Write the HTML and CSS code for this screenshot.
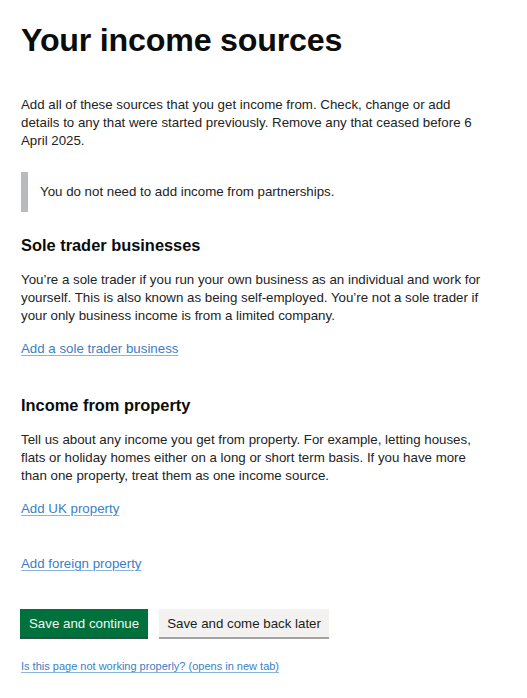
FILE: index.html
```html
<!DOCTYPE html>
<html lang="en">
<head>
<meta charset="utf-8">
<title>Your income sources</title>
<link rel="stylesheet" href="styles.css">
</head>
<body>
<main class="page">
  <h1 class="heading-xl">Your income sources</h1>
  <p class="body intro">Add all of these sources that you get income from. Check, change or add details to any that were started previously. Remove any that ceased before 6 April 2025.</p>
  <div class="inset">You do not need to add income from partnerships.</div>

  <section class="source">
    <h2 class="heading-m">Sole trader businesses</h2>
    <p class="body">You’re a sole trader if you run your own business as an individual and work for yourself. This is also known as being self-employed. You’re not a sole trader if your only business income is from a limited company.</p>
    <p class="link-row"><a class="link" href="#">Add a sole trader business</a></p>
  </section>

  <section class="source">
    <h2 class="heading-m">Income from property</h2>
    <p class="body">Tell us about any income you get from property. For example, letting houses, flats or holiday homes either on a long or short term basis. If you have more than one property, treat them as one income source.</p>
    <p class="link-row"><a class="link" href="#">Add UK property</a></p>
    <p class="link-row spaced"><a class="link" href="#">Add foreign property</a></p>
  </section>

  <div class="button-group">
    <button class="button primary" type="button">Save and continue</button>
    <button class="button secondary" type="button">Save and come back later</button>
  </div>

  <p class="help"><a class="link small" href="#">Is this page not working properly? (opens in new tab)</a></p>
</main>
</body>
</html>
```

FILE: styles.css
```css
html, body {
  margin: 0;
  padding: 0;
  background: #ffffff;
}

body {
  font-family: "Liberation Sans", Arial, sans-serif;
  color: #0b0c0c;
  -webkit-font-smoothing: antialiased;
}

.page {
  display: flex;
  flex-direction: column;
  align-items: flex-start;
  padding: 22px 21px 20px 20px;
  max-width: 470px;
}

.heading-xl {
  margin: 0 0 38px 1px;
  font-size: 32.2px;
  line-height: 36px;
  font-weight: 700;
  letter-spacing: -0.2px;
}

.body {
  margin: 0 0 0 1px;
  font-size: 13.3px;
  line-height: 18px;
  color: #222323;
}

.intro {
  margin-bottom: 22px;
}

.inset {
  align-self: stretch;
  margin-left: 1px;
  border-left: 7px solid #b8babc;
  padding: 11px 11px 11px 12px;
  font-size: 13.3px;
  line-height: 18px;
  color: #222323;
  margin-bottom: 23px;
}

.source {
  display: flex;
  flex-direction: column;
  align-items: flex-start;
  margin-bottom: 37px;
}

.source + .source {
  margin-bottom: 36px;
}

.heading-m {
  margin: 0 0 16px 1px;
  font-size: 16.4px;
  line-height: 20px;
  font-weight: 700;
}

.source .body {
  margin-bottom: 15px;
}

.link-row {
  margin: 0 0 0 1px;
  font-size: 13.3px;
  line-height: 18px;
}

.link-row.spaced {
  margin-top: 37px;
}

.link {
  color: #3a80c4;
  text-decoration: underline;
  text-decoration-thickness: 1px;
  text-underline-offset: 2px;
  text-decoration-color: #8ab4dc;
}

.button-group {
  display: flex;
  gap: 11px;
  margin-bottom: 22px;
}

.button {
  font-family: "Liberation Sans", Arial, sans-serif;
  font-size: 13.3px;
  line-height: 17px;
  padding: 5px 8px 4px 8px;
  border: 1px solid transparent;
  border-radius: 0;
  cursor: pointer;
  margin: 0;
}

.primary {
  background: #00703c;
  color: #f2f7f4;
  box-shadow: 0 2px 0 #2b5240;
}

.secondary {
  padding-left: 7px;
  padding-right: 7px;
  background: #f3f2f1;
  color: #1b1c1c;
  box-shadow: 0 2px 0 #a3a3a3;
}

.help {
  margin: 0 0 0 1px;
  font-size: 11px;
  line-height: 14px;
}
```
